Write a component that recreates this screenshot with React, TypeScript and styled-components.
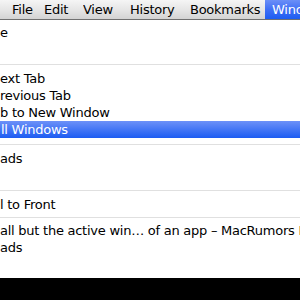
import React from "react";
import styled, { createGlobalStyle } from "styled-components";

const Global = createGlobalStyle`
  html, body { margin: 0; padding: 0; background: #ffffff; overflow: hidden; }
  body { font-family: "DejaVu Sans", "Liberation Sans", sans-serif; }
`;

const Page = styled.div`
  width: 300px;
  height: 300px;
  display: flex;
  flex-direction: column;
  overflow: hidden;
  background: #ffffff;
`;

const MenuBar = styled.div`
  height: 19px;
  flex: none;
  display: flex;
  align-items: stretch;
  background: linear-gradient(#f5f5f5, #e6e6e6 50%, #d3d3d3);
  border-bottom: 1px solid #707070;
  white-space: nowrap;
  overflow: hidden;
`;

const BarItem = styled.div<{ $active?: boolean; $w?: number; $pad: number }>`
  flex: none;
  display: flex;
  align-items: center;
  width: ${(p) => (p.$w ? `${p.$w}px` : "auto")};
  padding-left: ${(p) => p.$pad}px;
  padding-right: 8px;
  box-sizing: border-box;
  overflow: hidden;
  font-size: 13px;
  letter-spacing: -0.25px;
  color: ${(p) => (p.$active ? "#ffffff" : "#000000")};
  background: ${(p) =>
    p.$active ? "linear-gradient(#6b8ff7, #3f6ff5 50%, #1d5df2)" : "transparent"};
`;

const Sliver = styled.span`
  margin-left: -4px;
  font-weight: bold;
`;

const Menu = styled.div`
  flex: 1;
  display: flex;
  flex-direction: column;
  padding-top: 4px;
  background: #ffffff;
`;

const Item = styled.div<{ $hl?: boolean; $indent: number }>`
  height: 17px;
  flex: none;
  display: flex;
  align-items: center;
  padding-left: ${(p) => p.$indent}px;
  font-size: 13px;
  letter-spacing: -0.25px;
  white-space: nowrap;
  color: ${(p) => (p.$hl ? "#ffffff" : "#000000")};
  background: ${(p) =>
    p.$hl ? "linear-gradient(#6d91f8, #4476f5 50%, #1c5cf2)" : "transparent"};
`;

const Separator = styled.div<{ $h: number }>`
  height: ${(p) => p.$h}px;
  flex: none;
  display: flex;
  align-items: center;
  &::after {
    content: "";
    display: block;
    width: 100%;
    height: 1px;
    background: #e0e0e0;
  }
`;

const Footer = styled.div`
  height: 22px;
  flex: none;
  background: #000000;
`;

const bar = [
  { label: "File", w: 32 },
  { label: "Edit", w: 39 },
  { label: "View", w: 47 },
  { label: "History", w: 60 },
  { label: "Bookmarks", w: 75 },
];

type Entry = { text?: string; indent?: number; hl?: boolean; sep?: number };

const entries: Entry[] = [
  { text: "e", indent: 0 },
  { text: "" },
  { sep: 12 },
  { text: "ext Tab", indent: 0 },
  { text: "revious Tab", indent: 0 },
  { text: "b to New Window", indent: 0 },
  { text: "ll Windows", indent: 1, hl: true },
  { sep: 12 },
  { text: "ads", indent: 0 },
  { text: "" },
  { sep: 12 },
  { text: "l to Front", indent: 0 },
  { sep: 9 },
  { text: "all but the active win\u2026 of an app \u2013 MacRumors Forums", indent: 0 },
  { text: "ads", indent: 0 },
];

export default function App() {
  return (
    <Page>
      <Global />
      <MenuBar>
        <BarItem $w={12} $pad={0}>
          <Sliver>i</Sliver>
        </BarItem>
        {bar.map((b) => (
          <BarItem key={b.label} $w={b.w} $pad={0}>
            {b.label}
          </BarItem>
        ))}
        <BarItem $pad={7} $active>
          Window
        </BarItem>
      </MenuBar>
      <Menu>
        {entries.map((e, i) =>
          e.sep ? (
            <Separator key={i} $h={e.sep} />
          ) : (
            <Item key={i} $indent={e.indent ?? 0} $hl={e.hl}>
              {e.text}
            </Item>
          )
        )}
      </Menu>
      <Footer />
    </Page>
  );
}
